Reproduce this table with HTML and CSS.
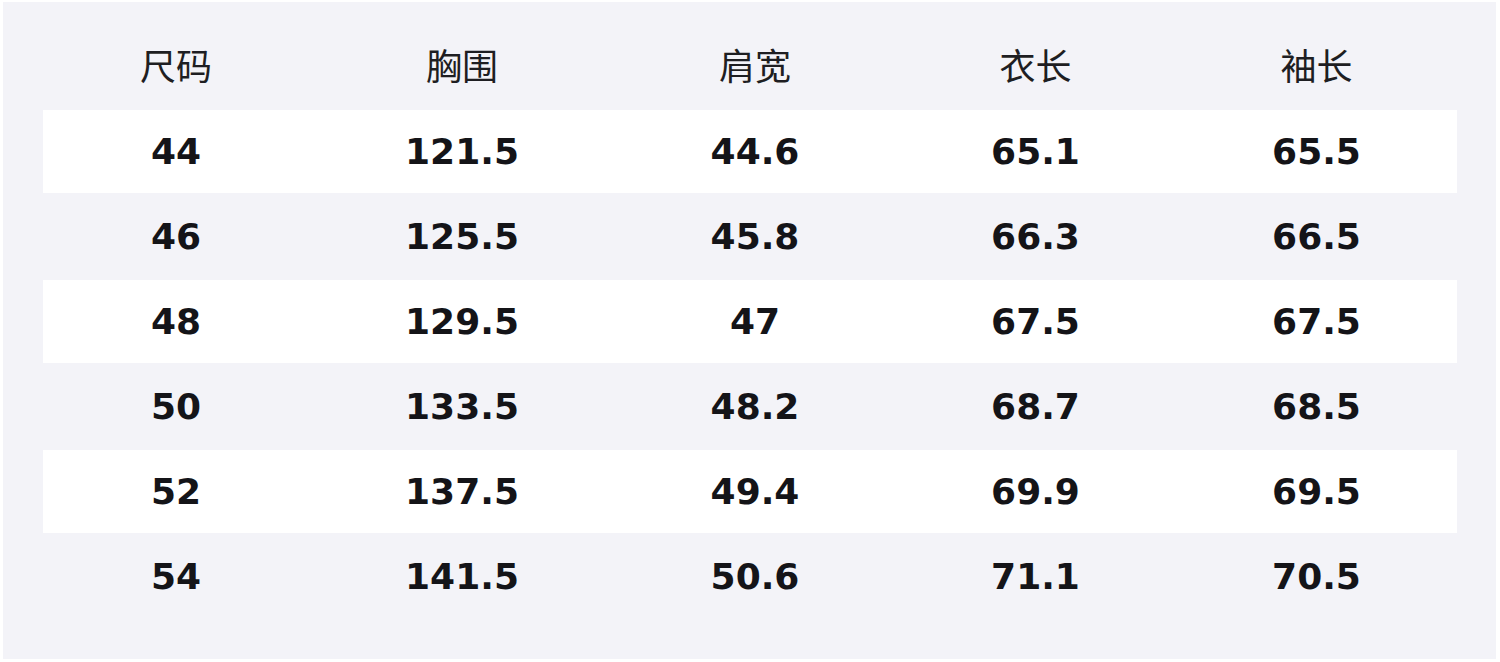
FILE: index.html
```html
<!DOCTYPE html>
<html lang="zh">
<head>
<meta charset="utf-8">
<link rel="stylesheet" href="styles.css">
</head>
<body>
<div class="panel">
  <div class="table">
    <div class="row head"><div>尺码</div><div>胸围</div><div>肩宽</div><div>衣长</div><div>袖长</div></div>
    <div class="row odd"><div>44</div><div>121.5</div><div>44.6</div><div>65.1</div><div>65.5</div></div>
    <div class="row"><div>46</div><div>125.5</div><div>45.8</div><div>66.3</div><div>66.5</div></div>
    <div class="row odd"><div>48</div><div>129.5</div><div>47</div><div>67.5</div><div>67.5</div></div>
    <div class="row"><div>50</div><div>133.5</div><div>48.2</div><div>68.7</div><div>68.5</div></div>
    <div class="row odd"><div>52</div><div>137.5</div><div>49.4</div><div>69.9</div><div>69.5</div></div>
    <div class="row"><div>54</div><div>141.5</div><div>50.6</div><div>71.1</div><div>70.5</div></div>
  </div>
</div>
</body>
</html>
```
FILE: styles.css
```css
html, body {
  margin: 0;
  padding: 0;
  background: #ffffff;
}
body {
  padding: 2px 4px 3px 3px;
}
.panel {
  background: #f3f3f8;
  height: 657px;
  box-sizing: border-box;
  padding: 23px 39px 0 40px;
}
.table {
  display: flex;
  flex-direction: column;
  gap: 2px;
}
.row {
  display: grid;
  grid-template-columns: 266px 306px 280px 281px 281px;
  height: 83px;
  align-items: center;
  text-align: center;
  font-family: "DejaVu Sans", sans-serif;
  font-weight: bold;
  font-size: 36px;
  color: #141418;
}
.row.odd {
  background: #ffffff;
}
.row.head {
  box-sizing: border-box;
  padding-bottom: 6px;
  font-family: "Noto Sans CJK SC", sans-serif;
  font-weight: 400;
  font-size: 36px;
  color: #1e1e22;
}
```
